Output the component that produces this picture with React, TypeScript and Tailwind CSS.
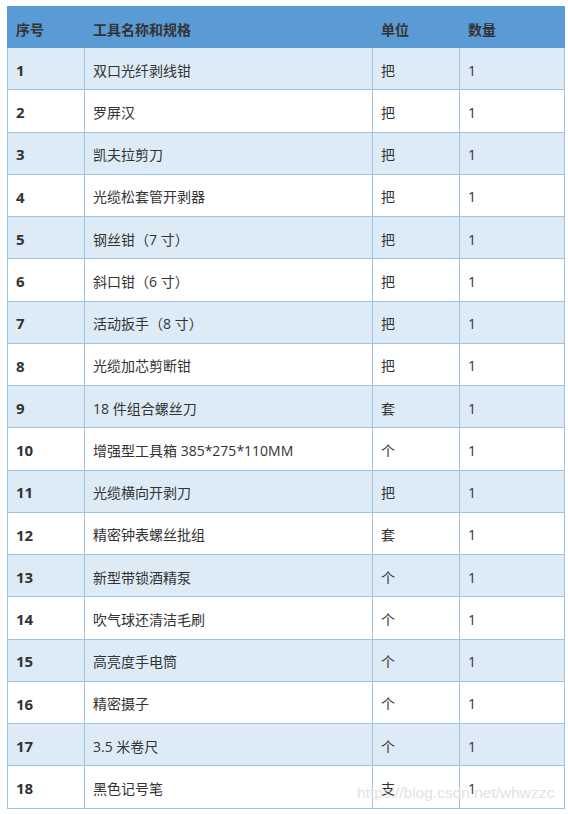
import React from "react";

const rows: [string, string, string, string][] = [
  ["1", "双口光纤剥线钳", "把", "1"],
  ["2", "罗屏汉", "把", "1"],
  ["3", "凯夫拉剪刀", "把", "1"],
  ["4", "光缆松套管开剥器", "把", "1"],
  ["5", "钢丝钳（7 寸）", "把", "1"],
  ["6", "斜口钳（6 寸）", "把", "1"],
  ["7", "活动扳手（8 寸）", "把", "1"],
  ["8", "光缆加芯剪断钳", "把", "1"],
  ["9", "18 件组合螺丝刀", "套", "1"],
  ["10", "增强型工具箱 385*275*110MM", "个", "1"],
  ["11", "光缆横向开剥刀", "把", "1"],
  ["12", "精密钟表螺丝批组", "套", "1"],
  ["13", "新型带锁酒精泵", "个", "1"],
  ["14", "吹气球还清洁毛刷", "个", "1"],
  ["15", "高亮度手电筒", "个", "1"],
  ["16", "精密摄子", "个", "1"],
  ["17", "3.5 米卷尺", "个", "1"],
  ["18", "黑色记号笔", "支", "1"],
];

export default function App() {
  return (
    <div
      className="relative w-[568px] h-[814px] bg-white pt-[6px] pl-[7px] text-[14px] text-[#333333]"
      style={{ fontFamily: '"Open Sans", "Noto Sans CJK SC", sans-serif' }}
    >
      <div className="w-[558px]">
        <div className="grid grid-cols-[77px_288px_87px_106px] h-[42px] bg-[#5b9bd5] font-bold items-center">
          <div className="pl-[9px] pt-[4px]">序号</div>
          <div className="pl-[9px] pt-[4px]">工具名称和规格</div>
          <div className="pl-[9px] pt-[4px]">单位</div>
          <div className="pl-[9px] pt-[4px]">数量</div>
        </div>
        {rows.map((r, i) => (
          <div
            key={r[0]}
            className={
              "grid grid-cols-[76px_288px_87px_105px] h-[42.25px] border-x border-b border-[#9dc3e6] items-stretch " +
              (i % 2 === 0 ? "bg-[#ddebf7]" : "bg-white")
            }
          >
            <div className="flex items-center pl-[8px] pt-[3px] font-bold text-[15px]">{r[0]}</div>
            <div className="flex items-center pl-[8px] pt-[3px] border-l border-[#9dc3e6]">{r[1]}</div>
            <div className="flex items-center pl-[8px] pt-[3px] border-l border-[#9dc3e6]">{r[2]}</div>
            <div className="flex items-center pl-[8px] pt-[3px] border-l border-[#9dc3e6]">{r[3]}</div>
          </div>
        ))}
      </div>
      <div
        className="absolute left-[357px] top-[783px] text-[15.5px] leading-[20px] text-[#e2e2e2] pointer-events-none"
        style={{ fontFamily: '"Liberation Sans", sans-serif' }}
      >
        https://blog.csdn.net/whwzzc
      </div>
    </div>
  );
}
